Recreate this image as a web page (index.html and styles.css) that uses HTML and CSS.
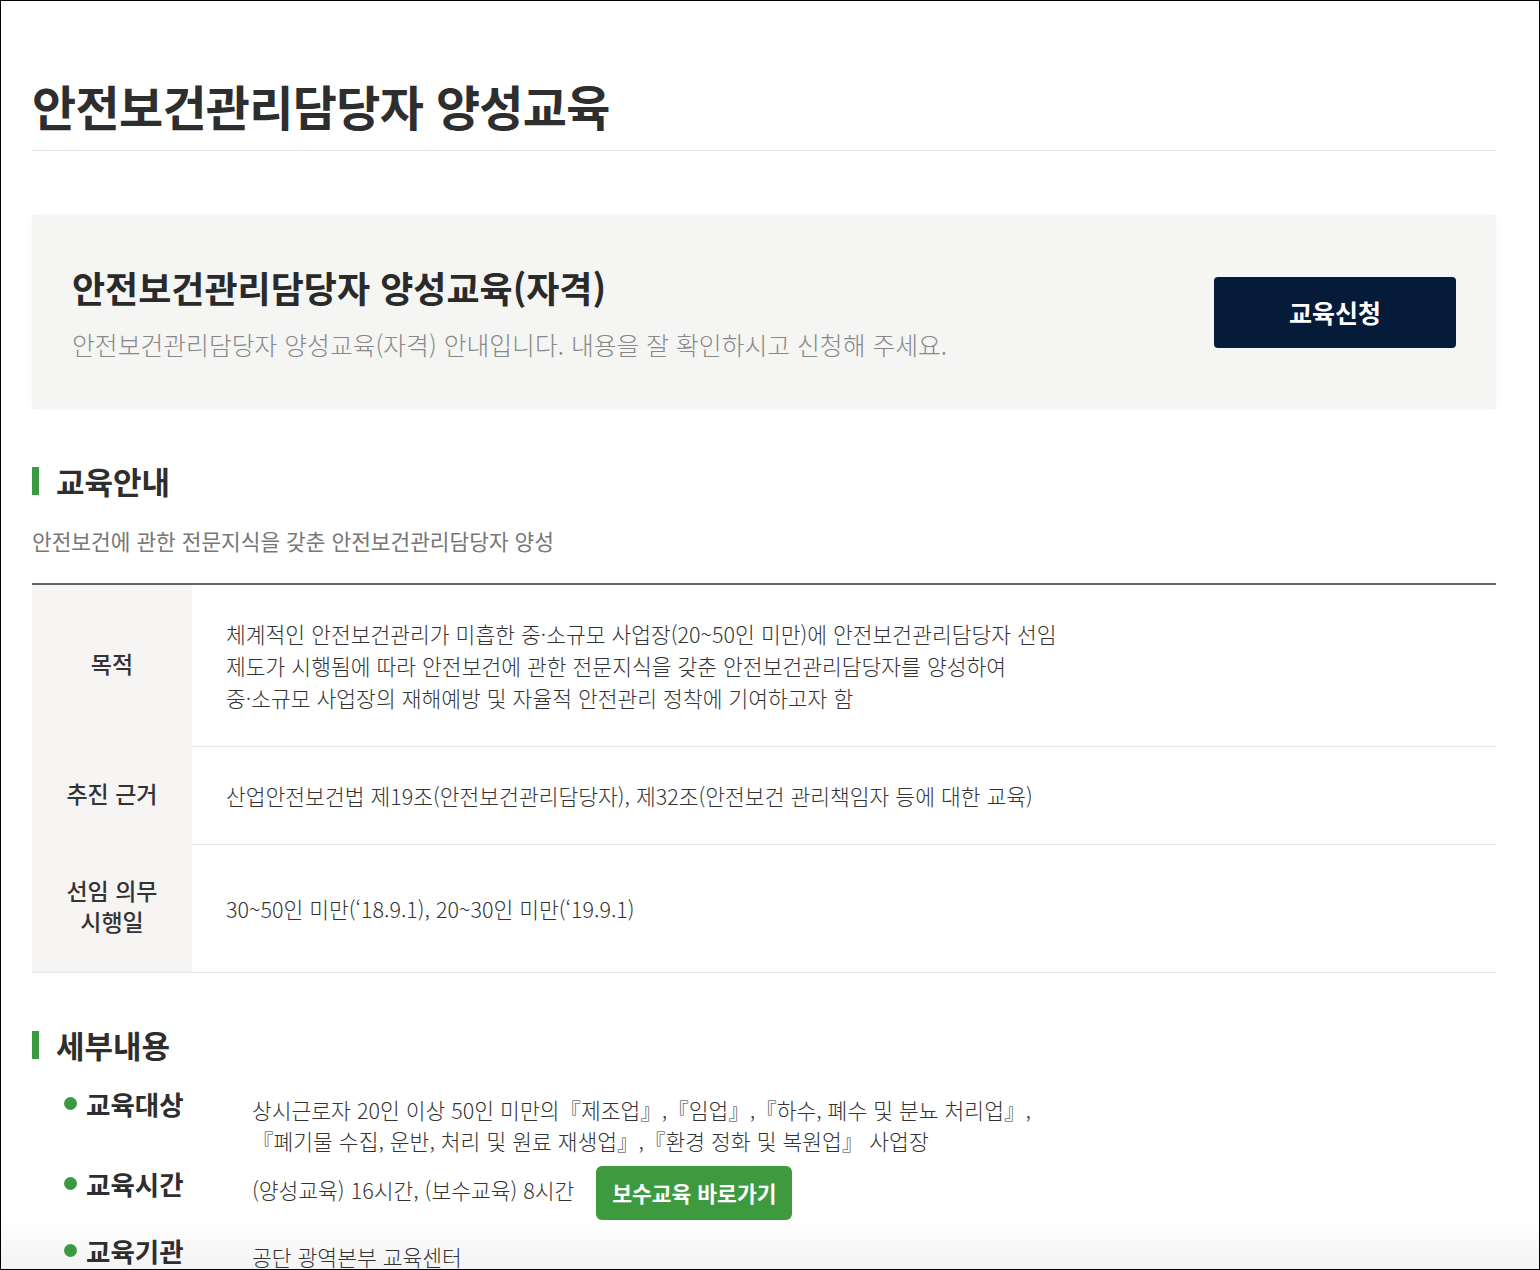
FILE: index.html
```html
<!DOCTYPE html>
<html lang="ko">
<head>
<meta charset="utf-8">
<title>안전보건관리담당자 양성교육</title>
<link rel="stylesheet" href="styles.css">
</head>
<body>
<div class="page">
  <h1 class="page-title">안전보건관리담당자 양성교육</h1>

  <section class="intro-card">
    <div class="intro-text">
      <h2 class="intro-title">안전보건관리담당자 양성교육(자격)</h2>
      <p class="intro-sub">안전보건관리담당자 양성교육(자격) 안내입니다. 내용을 잘 확인하시고 신청해 주세요.</p>
    </div>
    <a class="btn-apply" href="#">교육신청</a>
  </section>

  <h3 class="sec-title sec-first">교육안내</h3>
  <p class="sec-desc">안전보건에 관한 전문지식을 갖춘 안전보건관리담당자 양성</p>

  <table class="info-table">
    <tbody>
      <tr>
        <th>목적</th>
        <td>체계적인 안전보건관리가 미흡한 중·소규모 사업장(20~50인 미만)에 안전보건관리담당자 선임<br>제도가 시행됨에 따라 안전보건에 관한 전문지식을 갖춘 안전보건관리담당자를 양성하여<br>중·소규모 사업장의 재해예방 및 자율적 안전관리 정착에 기여하고자 함</td>
      </tr>
      <tr>
        <th>추진 근거</th>
        <td>산업안전보건법 제19조(안전보건관리담당자), 제32조(안전보건 관리책임자 등에 대한 교육)</td>
      </tr>
      <tr class="last">
        <th>선임 의무<br>시행일</th>
        <td>30~50인 미만(‘18.9.1), 20~30인 미만(‘19.9.1)</td>
      </tr>
    </tbody>
  </table>

  <h3 class="sec-title sec-second">세부내용</h3>
  <ul class="detail-list">
    <li class="detail-item">
      <span class="detail-label">교육대상</span>
      <div class="detail-body">상시근로자 20인 이상 50인 미만의『제조업』,『임업』,『하수, 폐수 및 분뇨 처리업』,<br>『폐기물 수집, 운반, 처리 및 원료 재생업』,『환경 정화 및 복원업』 사업장</div>
    </li>
    <li class="detail-item">
      <span class="detail-label">교육시간</span>
      <div class="detail-body detail-row"><span>(양성교육) 16시간, (보수교육) 8시간</span><a class="btn-green" href="#">보수교육 바로가기</a></div>
    </li>
    <li class="detail-item detail-last">
      <span class="detail-label">교육기관</span>
      <div class="detail-body">공단 광역본부 교육센터</div>
    </li>
  </ul>
</div>
</body>
</html>
```
FILE: styles.css
```css
* { box-sizing: border-box; }
html, body { margin: 0; padding: 0; background: #fff; }
body {
  font-family: "Noto Sans CJK KR", "Noto Sans", sans-serif;
  color: #333;
}
.page {
  width: 1540px;
  height: 1270px;
  border: 1px solid #000;
  overflow: hidden;
  padding: 0 43px 0 31px;
  background: linear-gradient(to bottom, #fff calc(100% - 50px), #f3f3f3);
}
.page-title {
  margin: 0;
  padding: 71px 0 12px;
  font-size: 48px;
  line-height: 66px;
  font-weight: 700;
  color: #2e2e2e;
  letter-spacing: -0.7px;
  border-bottom: 1px solid #e6e6e6;
}
.intro-card {
  margin-top: 64px;
  height: 194px;
  padding: 0 40px;
  background: #f5f5f4;
  box-shadow: 0 0 8px rgba(0,0,0,0.03);
  display: flex;
  align-items: center;
  justify-content: space-between;
}
.intro-text { display: flex; flex-direction: column; gap: 16px; }
.intro-title {
  margin: 0;
  font-size: 36px;
  line-height: 48px;
  font-weight: 700;
  color: #2a2a2a;
}
.intro-sub {
  margin: 0;
  font-size: 24.8px;
  line-height: 34px;
  font-weight: 300;
  color: #888;
}
.btn-apply {
  width: 242px;
  height: 71px;
  border-radius: 4px;
  background: #061b3a;
  color: #fff;
  text-decoration: none;
  font-size: 25px;
  font-weight: 700;
  display: flex;
  align-items: center;
  justify-content: center;
}
.sec-title {
  margin: 0;
  display: flex;
  align-items: center;
  gap: 17px;
  font-size: 31px;
  line-height: 40px;
  font-weight: 700;
  color: #2e2e2e;
}
.sec-title::before {
  content: "";
  width: 7px;
  height: 28px;
  background: #3b9a40;
}
.sec-first { margin-top: 52px; }
.sec-second { margin-top: 52px; }
.sec-desc {
  margin: 25px 0 0;
  font-size: 21.4px;
  line-height: 30px;
  color: #777;
  font-weight: 400;
}
.info-table {
  margin-top: 27px;
  width: 100%;
  border-collapse: collapse;
  border-top: 2px solid #666;
}
.info-table th {
  width: 160px;
  background: #f6f5f4;
  font-size: 23px;
  line-height: 31px;
  font-weight: 500;
  color: #333;
  text-align: center;
  padding: 30px 10px 35px;
}
.info-table td {
  padding: 33px 34px 32px;
  font-size: 21.5px;
  line-height: 32px;
  font-weight: 300;
  color: #333;
  border-bottom: 1px solid #e8e8e8;
}
.info-table tr.last th, .info-table tr.last td { border-bottom: 1px solid #e8e8e8; }
.detail-list {
  list-style: none;
  margin: 21px 0 0;
  padding: 0 0 0 32px;
  display: flex;
  flex-direction: column;
  gap: 10px;
}
.detail-item {
  display: grid;
  grid-template-columns: 188px 1fr;
  align-items: start;
}
.detail-last { margin-top: 3px; }
.detail-label {
  display: flex;
  align-items: center;
  gap: 9px;
  font-size: 26.5px;
  line-height: 36px;
  font-weight: 700;
  color: #2e2e2e;
}
.detail-label::before {
  content: "";
  width: 13px;
  height: 13px;
  border-radius: 50%;
  background: #3b9a40;
}
.detail-body {
  padding-top: 8px;
  font-size: 21.5px;
  line-height: 31px;
  font-weight: 300;
  color: #333;
}
.detail-row {
  padding-top: 0;
  display: flex;
  align-items: center;
  gap: 22px;
}
.detail-row span { position: relative; top: -3px; }
.btn-green {
  width: 196px;
  height: 54px;
  border-radius: 6px;
  background: #3d9a3f;
  color: #fff;
  text-decoration: none;
  font-size: 21.5px;
  font-weight: 700;
  display: flex;
  align-items: center;
  justify-content: center;
}
```
